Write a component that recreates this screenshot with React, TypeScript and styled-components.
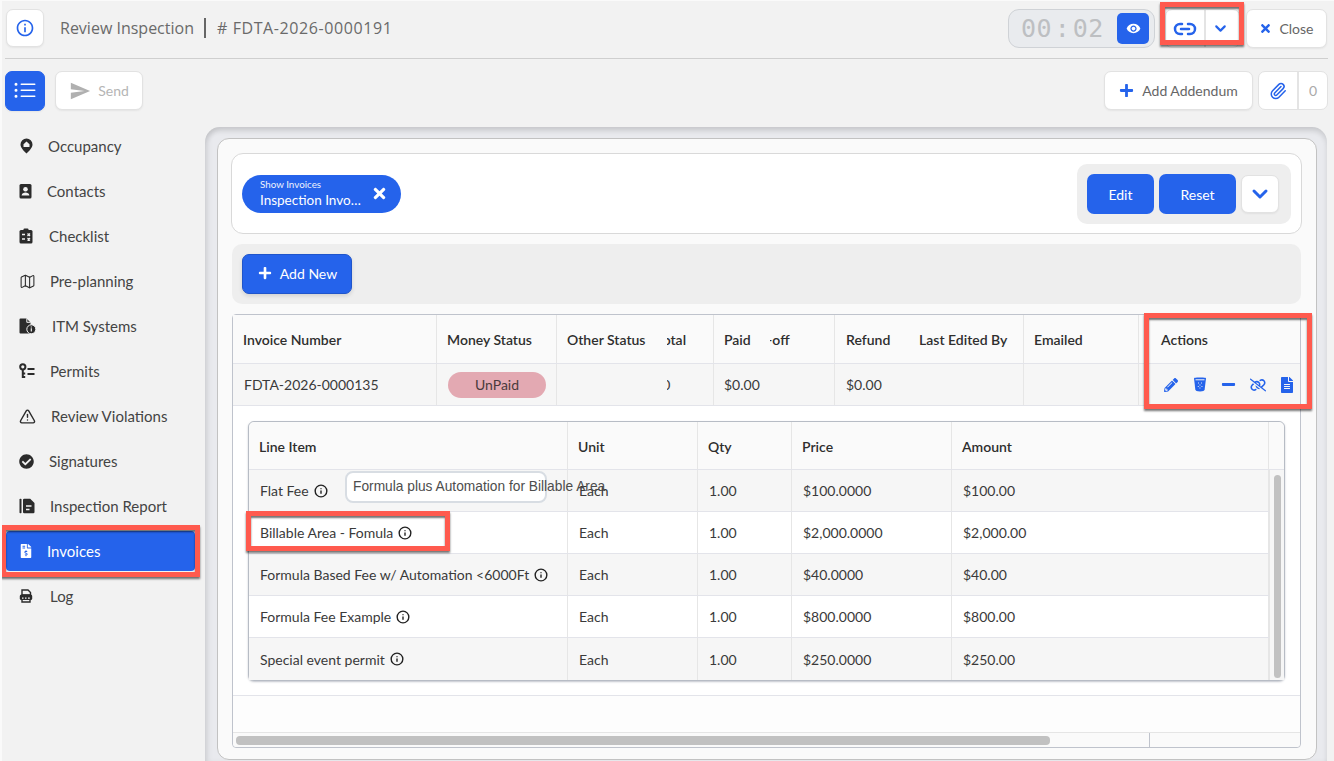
import React, { FC, ReactNode } from "react";
import styled, { createGlobalStyle } from "styled-components";
import { Link2, ChevronDown, Info, Paperclip, Map as MapIcon, TriangleAlert } from "lucide-react";
import {
  FaCheckCircle,
  FaFileAlt,
  FaFileInvoiceDollar,
  FaMinus,
  FaPencilAlt,
  FaPlus,
  FaTimes,
} from "react-icons/fa";
import { BsListUl } from "react-icons/bs";
import { MdInfoOutline, MdRemoveRedEye, MdSend } from "react-icons/md";
import { FaLinkSlash } from "react-icons/fa6";

const BLUE = "#2563eb";

const GlobalStyle = createGlobalStyle`
  html, body {
    margin: 0;
    padding: 0;
    height: 761px;
    overflow: hidden;
    background: #fafafa;
    font-family: "Lato", "Liberation Sans", sans-serif;
    color: #333;
  }
  * { box-sizing: border-box; }
`;

const Page = styled.div`
  height: 761px;
  margin: 1px 0 0 2px;
  background: #f2f2f2;
  display: flex;
  flex-direction: column;
  overflow: hidden;
`;

const Header = styled.header`
  height: 58px;
  margin: 0 6px 0 3px;
  padding: 8px 1px 0 1px;
  display: flex;
  align-items: flex-start;
  border-bottom: 1px solid #cfcfcf;
  flex: none;
`;

const IconButton = styled.button<{ $size?: number; $blue?: boolean }>`
  width: ${(p) => p.$size ?? 39}px;
  height: ${(p) => p.$size ?? 39}px;
  padding: 0;
  display: flex;
  align-items: center;
  justify-content: center;
  border-radius: 7px;
  border: 1px solid ${(p) => (p.$blue ? BLUE : "#e2e2e2")};
  background: ${(p) => (p.$blue ? BLUE : "#fff")};
  color: ${(p) => (p.$blue ? "#fff" : BLUE)};
  box-shadow: 0 1px 2px rgba(0, 0, 0, 0.06);
  flex: none;
`;

const Title = styled.div`
  margin: 0 0 0 16px;
  height: 37px;
  display: flex;
  align-items: center;
  font-family: "Open Sans", sans-serif;
  font-size: 16px;
  color: #6a6a6a;
`;

const TitleBar = styled.span`
  width: 2px;
  height: 20px;
  margin: 0 11px 0 10px;
  background: #666;
`;

const TitleId = styled.span`
  letter-spacing: 0.6px;
`;

const HeaderRight = styled.div`
  margin-left: auto;
  display: flex;
`;

const Timer = styled.div`
  width: 147px;
  height: 39px;
  margin-right: 10px;
  padding: 0 5px 0 12px;
  display: flex;
  align-items: center;
  justify-content: space-between;
  background: #e9ebee;
  border: 1px solid #cfd2d6;
  border-radius: 11px;
`;

const TimerDigits = styled.span`
  font-family: "DejaVu Sans Mono", monospace;
  font-size: 25px;
  letter-spacing: 0.5px;
  word-spacing: -13px;
  color: #bdbfc2;
  white-space: nowrap;
`;

const EyeButton = styled.div`
  width: 32px;
  height: 31px;
  border-radius: 5px;
  background: ${BLUE};
  color: #fff;
  display: flex;
  align-items: center;
  justify-content: center;
`;

const SplitButton = styled.div`
  position: relative;
  height: 39px;
  display: flex;
  background: #fff;
  border: 1px solid #e2e2e2;
  border-radius: 7px;
  color: ${BLUE};
`;

const SplitPart = styled.div<{ $w: number; $divider?: boolean }>`
  width: ${(p) => p.$w}px;
  display: flex;
  align-items: center;
  justify-content: center;
  border-right: ${(p) => (p.$divider ? "2px solid #e4e4e4" : "none")};
`;

const ChevronPart = styled(SplitPart)`
  padding-right: 4px;
`;

const Callout = styled.div<{ $t: number; $r: number; $b: number; $l: number }>`
  position: absolute;
  top: ${(p) => p.$t}px;
  right: ${(p) => p.$r}px;
  bottom: ${(p) => p.$b}px;
  left: ${(p) => p.$l}px;
  border: 5px solid #ff5a4e;
  box-shadow: 0 2px 2px rgba(0, 0, 0, 0.55), inset 0 2px 2px rgba(0, 0, 0, 0.55);
  pointer-events: none;
  z-index: 5;
`;

const TextButton = styled.button<{ $w: number; $muted?: boolean }>`
  width: ${(p) => p.$w}px;
  height: 39px;
  padding: 0;
  display: flex;
  align-items: center;
  justify-content: center;
  gap: 7px;
  font-family: inherit;
  font-size: 14px;
  color: ${(p) => (p.$muted ? "#b5b5b5" : "#666")};
  background: #fff;
  border: 1px solid #e2e2e2;
  border-radius: 7px;
  box-shadow: 0 1px 2px rgba(0, 0, 0, 0.06);
  flex: none;
`;

const CloseWrap = styled(TextButton)`
  margin-left: 6px;
  svg { color: ${BLUE}; }
`;

const Toolbar = styled.div`
  height: 40px;
  margin: 12px 6px 13px 3px;
  display: flex;
  align-items: flex-start;
  flex: none;
`;

const SendWrap = styled(TextButton)`
  margin-left: 10px;
  svg { color: #b0b0b0; }
`;

const AddendumWrap = styled(TextButton)`
  margin-left: auto;
  gap: 8px;
  svg { color: ${BLUE}; }
`;

const AttachGroup = styled.div`
  width: 70px;
  height: 39px;
  margin-left: 5px;
  display: flex;
  background: #fff;
  border: 1px solid #e2e2e2;
  border-radius: 7px;
  font-size: 14px;
  color: #aaa;
`;

const Main = styled.div`
  flex: 1;
  min-height: 0;
  display: flex;
`;

const Sidebar = styled.nav`
  width: 203px;
  padding: 2px 10px 0 4px;
  display: flex;
  flex-direction: column;
  gap: 5px;
  flex: none;
`;

const NavItem = styled.div<{ $active?: boolean }>`
  position: relative;
  height: 40px;
  padding-left: 13px;
  display: flex;
  align-items: center;
  font-size: 15px;
  border-radius: 4px;
  color: ${(p) => (p.$active ? "#fff" : "#444")};
  background: ${(p) => (p.$active ? BLUE : "transparent")};
`;

const NavIcon = styled.span<{ $w: number; $active?: boolean }>`
  width: ${(p) => p.$w}px;
  display: flex;
  align-items: center;
  flex: none;
  color: ${(p) => (p.$active ? "#fff" : "#2b2b2b")};
`;

const PanelFrame = styled.div`
  flex: 1;
  margin: 3px 7px 0 0;
  padding: 11px 10px 0 12px;
  background: #e9eaee;
  border-radius: 15px 15px 0 0;
  box-shadow: inset 0 4px 5px rgba(0, 0, 0, 0.12), inset 4px 0 5px rgba(0, 0, 0, 0.05);
  min-width: 0;
`;

const Panel = styled.div`
  height: 622px;
  padding: 14px 14px 0 13px;
  background: #fafafa;
  border: 1px solid #c2c2c2;
  border-radius: 12px;
`;

const FilterCard = styled.div`
  height: 81px;
  padding: 0 10px;
  display: flex;
  align-items: center;
  justify-content: space-between;
  background: #fff;
  border: 1px solid #d9d9d9;
  border-radius: 12px;
`;

const Pill = styled.div`
  width: 159px;
  height: 38px;
  padding: 0 13px 0 18px;
  display: flex;
  align-items: center;
  justify-content: space-between;
  border-radius: 19px;
  background: ${BLUE};
  color: #fff;
`;

const PillText = styled.div`
  width: 102px;
  padding-top: 1px;
  display: flex;
  flex-direction: column;
  line-height: 1;
`;

const PillSmall = styled.span`
  font-size: 9.8px;
  margin-bottom: 2px;
  opacity: 0.92;
`;

const PillMain = styled.span`
  font-size: 13.5px;
  line-height: 16px;
  white-space: nowrap;
  overflow: hidden;
  text-overflow: ellipsis;
`;

const FilterActions = styled.div`
  width: 214px;
  height: 60px;
  padding: 0 11px 0 10px;
  display: flex;
  align-items: center;
  gap: 5px;
  background: #eeeeee;
  border-radius: 10px;
`;

const PrimaryButton = styled.button<{ $w: number; $h?: number }>`
  width: ${(p) => p.$w}px;
  height: ${(p) => p.$h ?? 40}px;
  padding: 1px 0 0;
  display: flex;
  align-items: center;
  justify-content: center;
  gap: 7px;
  font-family: inherit;
  font-size: 14px;
  color: #fff;
  background: ${BLUE};
  border: none;
  border-radius: 7px;
  flex: none;
`;

const AddCard = styled.div`
  height: 60px;
  margin: 10px 1px;
  padding: 10px;
  background: #eeeeee;
  border-radius: 10px;
`;

const AddButton = styled(PrimaryButton)`
  padding: 0 0 2px 1px;
  gap: 8px;
  box-shadow: 0 2px 4px rgba(0, 0, 0, 0.12);
  border: 1px solid #1f55cb;
`;

const OuterTable = styled.div`
  position: relative;
  height: 434px;
  margin: 0 1px;
  display: flex;
  flex-direction: column;
  background: #fff;
  border: 1px solid #bfc3cc;
  border-radius: 4px;
`;

const columns = "204px 120px 110px 47px 56px 65px 74px 115px 115px 161px";

const OuterRow = styled.div<{ $h: number; $bg: string }>`
  height: ${(p) => p.$h}px;
  display: grid;
  grid-template-columns: ${columns};
  background: ${(p) => p.$bg};
  border-bottom: 1px solid #e3e4ea;
  flex: none;
`;

const Cell = styled.div<{ $line?: boolean; $pad?: number; $head?: boolean }>`
  min-width: 0;
  padding-left: ${(p) => p.$pad ?? 10}px;
  display: flex;
  align-items: center;
  overflow: hidden;
  white-space: nowrap;
  font-size: 14px;
  font-weight: ${(p) => (p.$head ? 600 : 400)};
  color: ${(p) => (p.$head ? "#2e2e2e" : "#3a3a3a")};
  border-right: ${(p) => (p.$line ? "1px solid #e6e6e6" : "none")};
`;

const ClippedText = styled.span<{ $shift: number }>`
  margin-left: ${(p) => -p.$shift}px;
`;

const Badge = styled.span`
  width: 98px;
  height: 26px;
  display: flex;
  align-items: center;
  justify-content: center;
  border-radius: 13px;
  background: #e3a9b2;
  color: #4a3a3c;
`;

const ActionIcons = styled.div`
  display: flex;
  align-items: center;
  color: ${BLUE};
`;

const ActionSlot = styled.span`
  width: 29px;
  display: flex;
  justify-content: center;
`;

const Detail = styled.div`
  height: 290px;
  padding: 15px 15px 0;
  border-bottom: 1px solid #e3e4ea;
  flex: none;
`;

const LineTable = styled.div`
  height: 260px;
  width: 1037px;
  display: flex;
  flex-direction: column;
  background: #fff;
  border: 1px solid #b7bcc5;
  border-radius: 6px;
  box-shadow: 0 1px 2px rgba(80, 90, 110, 0.35);
`;

const lineColumns = "319px 130px 94px 160px 317px";

const LineHead = styled.div`
  height: 48px;
  display: grid;
  grid-template-columns: ${lineColumns} 1fr;
  background: #fafafa;
  border-bottom: 1px solid #e3e4ea;
  border-radius: 6px 6px 0 0;
  flex: none;
  & > div { padding-top: 2px; }
`;

const LineBody = styled.div`
  position: relative;
  flex: 1;
  display: flex;
`;

const LineRows = styled.div`
  width: 1020px;
  flex: none;
`;

const LineRow = styled.div<{ $striped: boolean }>`
  height: 42px;
  display: grid;
  grid-template-columns: ${lineColumns};
  background: ${(p) => (p.$striped ? "#f6f6f6" : "#fff")};
  border-bottom: 1px solid #e3e4ea;
  &:last-child { border-bottom: none; }
`;

const LineCell = styled(Cell)`
  position: relative;
  overflow: visible;
  gap: 5px;
`;

const VScroll = styled.div`
  flex: 1;
  padding: 5px 3px 2px 4px;
  background: #f6f6f6;
  border-left: 1px solid #e6e6e6;
`;

const Thumb = styled.div<{ $w?: number }>`
  width: ${(p) => (p.$w ? `${p.$w}px` : "100%")};
  height: 100%;
  background: #c1c1c1;
  border-radius: 4px;
`;

const Tooltip = styled.div`
  position: absolute;
  top: 1px;
  left: 96px;
  width: 202px;
  height: 32px;
  padding: 0 6px 2px;
  display: flex;
  align-items: center;
  white-space: nowrap;
  font-family: "Liberation Sans", Arial, sans-serif;
  font-size: 13.75px;
  color: #4d4d4d;
  background: #fff;
  border: 2px solid #d8dde3;
  border-radius: 8px;
  z-index: 3;
`;

const BlankRow = styled.div`
  height: 36px;
  background: #fdfdfd;
  flex: none;
`;

const ScrollFooter = styled.div`
  flex: 1;
  display: flex;
  background: #fafafa;
  border-top: 1px solid #e5e5e5;
  border-radius: 0 0 4px 4px;
`;

const ScrollTrack = styled.div`
  width: 917px;
  padding: 3px 0 2px 3px;
  border-right: 1px solid #bfc3cc;
`;

/* hand drawn sidebar icons, the packages have nothing close for these */
const PinIcon = () => (
  <svg width="15" height="16" viewBox="0 0 15 16">
    <path d="M7.5 0.5a6 6 0 0 1 6 6c0 3.2-3.4 6.6-6 9-2.6-2.4-6-5.800-6-9a6 6 0 0 1 6-6z" fill="currentColor" />
    <path d="M7.500 3.600 10.500 6.300V9H4.500V6.300z" fill="#f2f2f2" />
  </svg>
);

const ContactIcon = () => (
  <svg width="13" height="16" viewBox="0 0 13 16">
    <rect x="0.500" y="1" width="12" height="14.500" rx="1.500" fill="currentColor" />
    <circle cx="6.500" cy="6.200" r="2.300" fill="#f2f2f2" />
    <path d="M2.600 12.500c.3-2.200 2-3 3.900-3s3.600.8 3.900 3z" fill="#f2f2f2" />
  </svg>
);

const ChecklistIcon = () => (
  <svg width="14" height="16" viewBox="0 0 14 16">
    <rect x="0.500" y="2" width="13" height="13.500" rx="1.500" fill="currentColor" />
    <rect x="4.500" y="0.500" width="5" height="3" rx="1" fill="currentColor" />
    <path d="M3 6.500h3M3 11h3M8.500 5.500l2.500 2.500M11 5.500L8.500 8M8.500 10l2.500 2.500M11 10l-2.500 2.500" stroke="#f2f2f2" strokeWidth="1.300" fill="none" />
  </svg>
);

const FileInfoIcon = () => (
  <svg width="17" height="16" viewBox="0 0 17 16">
    <path d="M0.500 1.500A1 1 0 0 1 1.500.5h6l4 4v10.500a.5.5 0 0 1-.5.500H1.500a1 1 0 0 1-1-1z" fill="currentColor" />
    <path d="M7.800 0.500v3.800h3.800" fill="none" stroke="#f2f2f2" strokeWidth="1" />
    <circle cx="12.300" cy="11.300" r="4.500" fill="currentColor" stroke="#f2f2f2" strokeWidth="1" />
    <path d="M12.300 10.300v3.200M12.300 8.600v.9" stroke="#f2f2f2" strokeWidth="1.200" />
  </svg>
);

const PermitIcon = () => (
  <svg width="16" height="16" viewBox="0 0 16 16">
    <circle cx="3.800" cy="3.800" r="2.600" fill="none" stroke="currentColor" strokeWidth="2" />
    <path d="M3.800 6v9M3.800 10.500h2.400M3.800 14h2.400M8.500 6h7M8.500 11h7" stroke="currentColor" strokeWidth="2" fill="none" />
  </svg>
);

const ReportIcon = () => (
  <svg width="16" height="16" viewBox="0 0 16 16">
    <rect x="0.500" y="0.800" width="2" height="14.400" rx="0.800" fill="currentColor" />
    <path d="M4 2a1.200 1.200 0 0 1 1.200-1.200h6L15.500 5v9a1.200 1.200 0 0 1-1.200 1.200H5.200A1.200 1.200 0 0 1 4 14z" fill="currentColor" />
    <path d="M7 8h5.500M7 11.500h3.500" stroke="#f2f2f2" strokeWidth="1.500" />
  </svg>
);

const LogIcon = () => (
  <svg width="14" height="14" viewBox="0 0 14 14">
    <path d="M3 1h6l2.500 2.500V6H3z" fill="none" stroke="currentColor" strokeWidth="1.400" />
    <rect x="0.800" y="5.500" width="12.400" height="5.500" rx="1.500" fill="currentColor" />
    <path d="M3 9.200h1.500M6 9.200h1.500M9 9.200h1.800" stroke="#f2f2f2" strokeWidth="1.300" />
    <path d="M3 11v2h8v-2" fill="none" stroke="currentColor" strokeWidth="1.400" />
  </svg>
);

const BinIcon = () => (
  <svg width="14" height="15" viewBox="0 0 14 15">
    <path d="M1 1.500C1 .8 2 .5 7 .5s6 .3 6 1l-1.300 10.800c-.2 1.600-1.700 2.200-4.700 2.200s-4.500-.6-4.700-2.200z" fill="currentColor" />
    <path d="M2.500 2.800h9" stroke="#f6f6f6" strokeWidth="1" />
    <path d="M5 6h.9M8 6h.9M6.500 8h.9M4.800 9.500h.9M8.500 9.500h.9M6.500 11h.9" stroke="#f6f6f6" strokeWidth="1" />
  </svg>
);

interface NavEntry {
  label: string;
  icon: ReactNode;
  width: number;
  active?: boolean;
}

const navEntries: NavEntry[] = [
  { label: "Occupancy", icon: <PinIcon />, width: 29 },
  { label: "Contacts", icon: <ContactIcon />, width: 28 },
  { label: "Checklist", icon: <ChecklistIcon />, width: 30 },
  { label: "Pre-planning", icon: <MapIcon size={17} strokeWidth={1.5} />, width: 31 },
  { label: "ITM Systems", icon: <FileInfoIcon />, width: 33 },
  { label: "Permits", icon: <PermitIcon />, width: 31 },
  { label: "Review Violations", icon: <TriangleAlert size={17} strokeWidth={2} />, width: 32 },
  { label: "Signatures", icon: <FaCheckCircle size={15} />, width: 30 },
  { label: "Inspection Report", icon: <ReportIcon />, width: 31 },
  { label: "Invoices", icon: <FaFileInvoiceDollar size={14} />, width: 28, active: true },
  { label: "Log", icon: <LogIcon />, width: 31 },
];

const lineItems = [
  { name: "Flat Fee", price: "$100.0000", amount: "$100.00" },
  { name: "Billable Area - Fomula", price: "$2,000.0000", amount: "$2,000.00" },
  { name: "Formula Based Fee w/ Automation <6000Ft", price: "$40.0000", amount: "$40.00" },
  { name: "Formula Fee Example", price: "$800.0000", amount: "$800.00" },
  { name: "Special event permit", price: "$250.0000", amount: "$250.00" },
];

const App: FC = () => {
  return (
    <Page>
      <GlobalStyle />
      <Header>
        <IconButton $size={38}>
          <MdInfoOutline size={20} />
        </IconButton>
        <Title>
          Review Inspection
          <TitleBar />
          <TitleId># FDTA-2026-0000191</TitleId>
        </Title>
        <HeaderRight>
          <Timer>
            <TimerDigits>00 : 02</TimerDigits>
            <EyeButton>
              <MdRemoveRedEye size={15} />
            </EyeButton>
          </Timer>
          <SplitButton>
            <SplitPart $w={40} $divider>
              <Link2 size={24} strokeWidth={2.5} />
            </SplitPart>
            <ChevronPart $w={33}>
              <ChevronDown size={17} strokeWidth={3} />
            </ChevronPart>
            <Callout $t={-8} $r={-5} $b={2} $l={-6} />
          </SplitButton>
          <CloseWrap $w={81}>
            <FaTimes size={13} />
            Close
          </CloseWrap>
        </HeaderRight>
      </Header>

      <Toolbar>
        <IconButton $size={40} $blue>
          <BsListUl size={24} />
        </IconButton>
        <SendWrap $w={88} $muted>
          <MdSend size={22} />
          Send
        </SendWrap>
        <AddendumWrap $w={149}>
          <FaPlus size={15} />
          Add Addendum
        </AddendumWrap>
        <AttachGroup>
          <SplitPart $w={40} $divider>
            <Paperclip size={18} color={BLUE} />
          </SplitPart>
          <SplitPart $w={28}>0</SplitPart>
        </AttachGroup>
      </Toolbar>

      <Main>
        <Sidebar>
          {navEntries.map((entry) => (
            <NavItem key={entry.label} $active={entry.active}>
              <NavIcon $w={entry.width} $active={entry.active}>
                {entry.icon}
              </NavIcon>
              {entry.label}
              {entry.active && <Callout $t={-6} $r={-5} $b={-6} $l={-5} />}
            </NavItem>
          ))}
        </Sidebar>

        <PanelFrame>
          <Panel>
            <FilterCard>
              <Pill>
                <PillText>
                  <PillSmall>Show Invoices</PillSmall>
                  <PillMain>Inspection Invoices</PillMain>
                </PillText>
                <FaTimes size={17} />
              </Pill>
              <FilterActions>
                <PrimaryButton $w={67}>Edit</PrimaryButton>
                <PrimaryButton $w={77}>Reset</PrimaryButton>
                <IconButton $size={38}>
                  <ChevronDown size={24} strokeWidth={3} />
                </IconButton>
              </FilterActions>
            </FilterCard>

            <AddCard>
              <AddButton $w={110}>
                <FaPlus size={14} />
                Add New
              </AddButton>
            </AddCard>

            <OuterTable>
              <OuterRow $h={49} $bg="#fafafa">
                <Cell $head $line>Invoice Number</Cell>
                <Cell $head $line>Money Status</Cell>
                <Cell $head>Other Status</Cell>
                <Cell $head $line $pad={0}><ClippedText $shift={11}>Total</ClippedText></Cell>
                <Cell $head>Paid</Cell>
                <Cell $head $line $pad={0}><ClippedText $shift={38}>Write-off</ClippedText></Cell>
                <Cell $head $pad={11}>Refund</Cell>
                <Cell $head $line>Last Edited By</Cell>
                <Cell $head $line>Emailed</Cell>
                <Cell $head $pad={22}>Actions</Cell>
              </OuterRow>
              <OuterRow $h={42} $bg="#f6f6f6">
                <Cell $line $pad={11}>FDTA-2026-0000135</Cell>
                <Cell $line $pad={11}><Badge>UnPaid</Badge></Cell>
                <Cell />
                <Cell $line $pad={0}><ClippedText $shift={60}>$3,190.00</ClippedText></Cell>
                <Cell>$0.00</Cell>
                <Cell $line />
                <Cell $pad={11}>$0.00</Cell>
                <Cell $line />
                <Cell $line />
                <Cell $pad={17}>
                  <ActionIcons>
                    <ActionSlot><FaPencilAlt size={14} /></ActionSlot>
                    <ActionSlot><BinIcon /></ActionSlot>
                    <ActionSlot><FaMinus size={15} /></ActionSlot>
                    <ActionSlot><FaLinkSlash size={16} /></ActionSlot>
                    <ActionSlot><FaFileAlt size={16} /></ActionSlot>
                  </ActionIcons>
                </Cell>
              </OuterRow>

              <Detail>
                <LineTable>
                  <LineHead>
                    <Cell $head $line>Line Item</Cell>
                    <Cell $head $line>Unit</Cell>
                    <Cell $head $line>Qty</Cell>
                    <Cell $head $line>Price</Cell>
                    <Cell $head $line>Amount</Cell>
                    <Cell />
                  </LineHead>
                  <LineBody>
                    <LineRows>
                      {lineItems.map((item, i) => (
                        <LineRow key={item.name} $striped={i % 2 === 0}>
                          <LineCell $line $pad={11}>
                            {item.name}
                            <Info size={14} color="#222" strokeWidth={2.4} />
                            {i === 1 && <Callout $t={-1} $r={117} $b={2} $l={-3} />}
                          </LineCell>
                          <Cell $line $pad={11}>Each</Cell>
                          <Cell $line $pad={11}>1.00</Cell>
                          <Cell $line $pad={11}>{item.price}</Cell>
                          <Cell $line $pad={11}>{item.amount}</Cell>
                        </LineRow>
                      ))}
                    </LineRows>
                    <VScroll>
                      <Thumb />
                    </VScroll>
                    <Tooltip>Formula plus Automation for Billable Area</Tooltip>
                  </LineBody>
                </LineTable>
              </Detail>

              <BlankRow />
              <ScrollFooter>
                <ScrollTrack>
                  <Thumb $w={814} />
                </ScrollTrack>
              </ScrollFooter>
              <Callout $t={-2} $r={-12} $b={338} $l={911} />
            </OuterTable>
          </Panel>
        </PanelFrame>
      </Main>
    </Page>
  );
};

export default App;
